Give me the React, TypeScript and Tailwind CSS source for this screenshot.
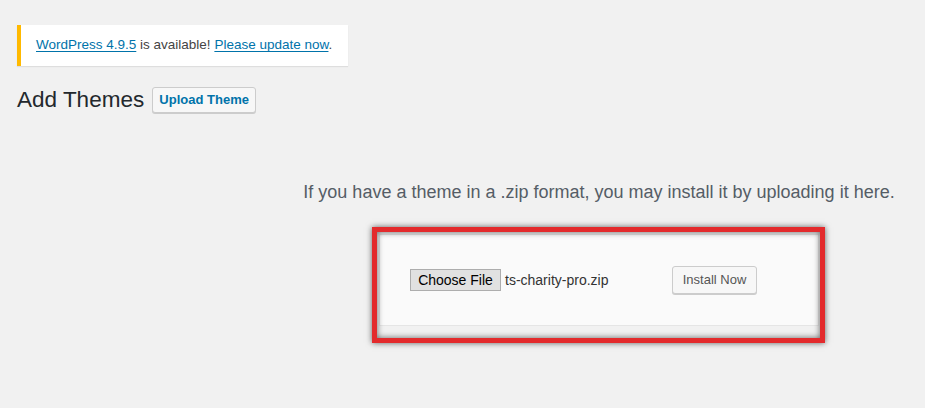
import React from "react";

export default function App() {
  return (
    <div
      className="relative w-[925px] h-[408px] overflow-hidden bg-[#f1f1f1] text-[#23282d]"
      style={{ fontFamily: '"Liberation Sans", Arial, sans-serif' }}
    >
      <div className="ml-[17px] w-[1164px] pt-[25px]">
        {/* Notice */}
        <div className="flex items-center w-[331px] h-[41px] bg-white border-l-4 border-[#ffb900] shadow-[0_1px_1px_rgba(0,0,0,0.08)] pl-[15px] text-[13.5px] text-[#444]">
          <span>
            <a className="text-[#0073aa] underline underline-offset-2" href="#">
              WordPress 4.9.5
            </a>{" "}
            is available!{" "}
            <a className="text-[#0073aa] underline underline-offset-2" href="#">
              Please update now
            </a>
            .
          </span>
        </div>

        {/* Heading */}
        <div className="flex items-center mt-[21px] h-[26px]">
          <h1 className="text-[22.5px] leading-[26px] font-normal text-[#23282d]">Add Themes</h1>
          <button className="ml-[8px] w-[104px] h-[26px] border border-[#ccc] bg-[#f7f7f7] rounded-[3px] text-[13px] font-semibold text-[#0073aa] shadow-[0_1px_0_#ccc]">
            Upload Theme
          </button>
        </div>

        {/* Help text */}
        <p className="mt-[67px] text-center text-[18px] leading-[24px] text-[#555d66]">
          If you have a theme in a .zip format, you may install it by uploading it here.
        </p>

        {/* Upload form */}
        <div className="mt-[30px] mx-auto w-[440px] h-[92px] bg-[#fafafa] border border-[#e5e5e5] flex items-center pl-[30px]">
          <div className="flex items-center w-[262px]">
            <button
              className="w-[91px] h-[22px] bg-[#e1e1e1] border border-[#adadad] text-[14px] text-black leading-none"
              style={{ fontFamily: '"Liberation Sans", Arial, sans-serif' }}
            >
              Choose File
            </button>
            <span className="ml-[4px] text-[14px] text-[#333]">ts-charity-pro.zip</span>
          </div>
          <button className="w-[85px] h-[28px] border border-[#ccc] bg-[#f7f7f7] rounded-[3px] text-[13px] text-[#555] shadow-[0_1px_0_#ccc] -mt-[1px]">
            Install Now
          </button>
        </div>
      </div>

      {/* Red annotation frame */}
      <div className="absolute left-[372px] top-[227px] w-[453px] h-[116px] border-[5px] border-[#e32a2c] shadow-[0_0_6px_rgba(0,0,0,0.6),inset_0_0_6px_rgba(0,0,0,0.6)] pointer-events-none" />
    </div>
  );
}
